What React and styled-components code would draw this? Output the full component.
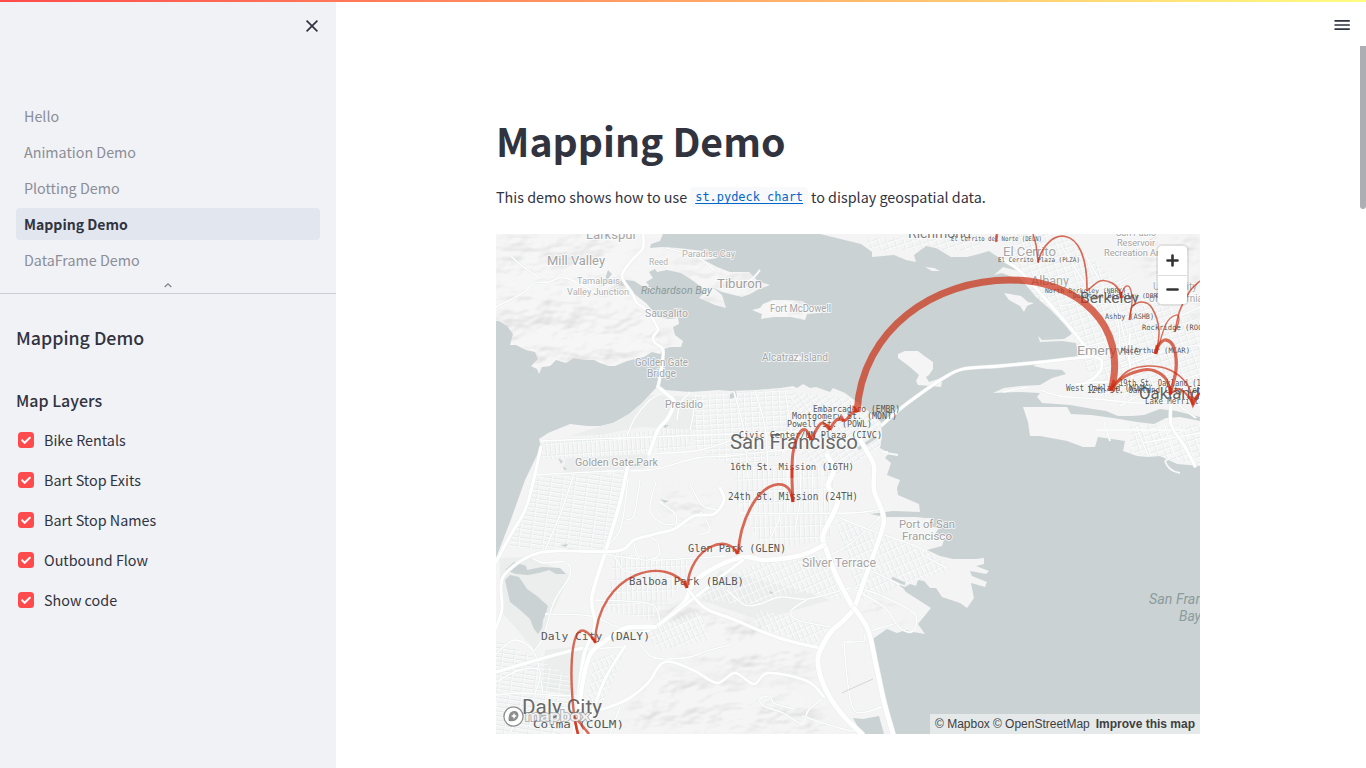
import React from 'react';
import styled, { createGlobalStyle } from 'styled-components';

const GlobalStyle = createGlobalStyle`
  * { box-sizing: border-box; }
  html, body { margin: 0; height: 100%; overflow: hidden; }
  body {
    background: #fff;
    color: #31333f;
    font-family: "Noto Sans CJK SC", "Open Sans", sans-serif;
    font-size: 14.4px;
  }
`;

const Page = styled.div`
  position: relative;
  display: flex;
  height: 768px;
  width: 1366px;
  overflow: hidden;
`;
const Decoration = styled.div`
  position: absolute;
  inset: 0 0 auto 0;
  height: 2px;
  background: linear-gradient(90deg, #ff4b4b, #fffd80);
  z-index: 2;
`;
const Sidebar = styled.aside`
  flex: 0 0 336px;
  height: 100%;
  background: #f0f2f6;
  display: flex;
  flex-direction: column;
`;
const SidebarTop = styled.div`
  height: 100px;
  padding: 16px 14px 0;
  display: flex;
  justify-content: flex-end;
`;
const IconButton = styled.button`
  display: flex;
  width: 20px;
  height: 20px;
  padding: 0;
  border: 0;
  background: none;
  color: #31333f;
`;
const Nav = styled.nav`
  height: 194px;
  padding: 0 16px;
  border-bottom: 1px solid #cbcdd2;
  display: flex;
  flex-direction: column;
  gap: 4px;
`;
const NavLink = styled.a`
  flex: 0 0 32px;
  line-height: 32px;
  padding: 0 8px;
  border-radius: 4px;
  font-size: ${(p) => (p.$active ? '14.05px' : '14.3px')};
  font-weight: ${(p) => (p.$active ? 700 : 400)};
  color: ${(p) => (p.$active ? '#31333f' : '#8b8d97')};
  background: ${(p) => (p.$active ? '#e2e7ef' : 'transparent')};
`;
const Chevron = styled.svg`
  align-self: center;
  margin-top: 1px;
`;
const Controls = styled.section`
  padding: 30px 16px;
`;
const Title = styled.h2`
  margin: 0 0 37px;
  font-size: 17.8px;
  font-weight: 500;
  line-height: 26px;
`;
const Subtitle = styled.h3`
  margin: 0 0 15px;
  font-size: 16px;
  font-weight: 500;
  line-height: 26px;
`;
const CheckList = styled.div`
  display: flex;
  flex-direction: column;
  gap: 16px;
`;
const CheckLabel = styled.label`
  display: flex;
  align-items: center;
  gap: 10px;
  padding-left: 2px;
  height: 24px;
  font-size: 14.35px;
  line-height: 24px;
`;
const Box = styled.span`
  display: flex;
  align-items: center;
  justify-content: center;
  width: 16px;
  height: 16px;
  border-radius: 3.5px;
  background: #ff4b4b;
`;
const Main = styled.main`
  flex: 1;
  display: flex;
  flex-direction: column;
`;
const Toolbar = styled.header`
  height: 46px;
  padding: 15px 14px 0;
  display: flex;
  justify-content: flex-end;
`;
const Scroller = styled.div`
  flex: 1;
  display: flex;
  justify-content: space-between;
  padding-left: 160px;
`;
const Content = styled.div`
  width: 704px;
  padding-top: 65px;
`;
const Scrollbar = styled.div`
  width: 6px;
  height: 163px;
  border-radius: 0 0 3px 3px;
  background: #adaeb3;
`;
const Heading = styled.h1`
  margin: 0;
  font-size: 39.2px;
  font-weight: 700;
  line-height: 58px;
`;
const Paragraph = styled.p`
  display: flex;
  align-items: center;
  margin: 15px 0 24px;
  height: 26px;
  font-size: 14.35px;
  line-height: 26px;
  white-space: nowrap;
`;
const Code = styled.code`
  height: 20px;
  margin: 0 3px;
  padding: 0 5px;
  border-radius: 4px;
  background: #f8f9fb;
  color: #0068c9;
  font: 11.95px/20px "DejaVu Sans Mono", monospace;
  text-decoration: underline;
  text-underline-offset: 2px;
`;
const MapFrame = styled.div`
  position: relative;
  width: 704px;
  height: 500px;
  overflow: hidden;
`;
const MapSvg = styled.svg`
  display: block;
`;
const ZoomGroup = styled.div`
  position: absolute;
  top: 12px;
  right: 13px;
  width: 29px;
  height: 58px;
  border-radius: 4px;
  background: #fff;
  box-shadow: 0 0 0 2px rgba(0, 0, 0, 0.08);
  display: flex;
  flex-direction: column;
`;
const ZoomButton = styled.button`
  flex: 1;
  display: flex;
  align-items: center;
  justify-content: center;
  padding: 0;
  border: 0;
  background: none;
  & + & { border-top: 1px solid #ddd; }
`;
const Attribution = styled.div`
  position: absolute;
  right: 0;
  bottom: 0;
  height: 20px;
  width: 270px;
  padding: 0 5px;
  display: flex;
  gap: 3px;
  font: 12px/20px "Liberation Sans", Arial, sans-serif;
  color: #404040;
  white-space: nowrap;
  background: rgba(255, 255, 255, 0.5);
`;
const Strong = styled.strong`
  margin-left: auto;
  font-weight: 700;
`;

// Catmull-Rom spline through a flat list of coordinates.
function curve(n) {
  const p = [];
  for (let i = 0; i < n.length; i += 2) p.push([n[i], n[i + 1]]);
  let d = `M${p[0]}`;
  for (let i = 0; i < p.length - 1; i += 1) {
    const a = p[i - 1] || p[i];
    const b = p[i];
    const c = p[i + 1];
    const e = p[i + 2] || c;
    d += `C${b[0] + (c[0] - a[0]) / 6} ${b[1] + (c[1] - a[1]) / 6} ${c[0] - (e[0] - b[0]) / 6} ${c[1] - (e[1] - b[1]) / 6} ${c[0]} ${c[1]}`;
  }
  return d;
}

const MARIN = 'M496 234H663L660 241 651 244 650 248 662 247 678 248 703 251 717 258 704 260 717 267 730 272 749 272 758 281 770 285 759 289 750 294 742 297 730 294 722 292 712 287 722 295 726 308 715 305 699 298 704 293 700 286 692 280 681 273 667 270 657 272 655 269 649 272 653 278 646 282 652 289 642 286 634 281 626 280 620 281 614 280 616 285 624 286 630 290 637 296 646 303 653 311 658 317 669 319 678 318 679 324 673 327 675 335 683 341 681 347 670 347 664 349 660 354 652 352 644 357 627 361 615 366 609 366 600 363 594 360 584 360 574 358 566 363 556 360 550 366 542 367 539 374 537 369 531 366 538 359 535 352 526 350 516 345 510 345 513 334 507 326 499 321 496 321Z';
const SF = 'M657 387L665 390 690 392 719 390 730 391 755 390 780 388 793 386 797 388 803 384 810 388 816 387 830 392 833 388 845 393 857 402 868 411 881 422 882 436 880 448 889 453 885 458 891 463 887 475 900 480 897 488 898 495 919 504 920 512 893 511 870 514 885 517 916 517 925 518 931 518 929 526 939 528 935 534 945 537 942 546 927 550 940 556 953 559 976 559 984 558 984 564 976 566 989 571 986 574 970 571 972 576 987 582 985 587 971 583 974 598 967 608 960 603 942 597 936 588 930 588 924 581 918 580 916 586 910 584 905 587 893 582 903 588 906 592 931 608 918 624 925 634 913 632 906 630 897 633 887 629 874 638 870 641 875 650 874 666 883 707 892 734H496V558L510 522 525 480 541 447 539 439 548 433 570 424 587 426 600 426 613 423 629 414 642 403 653 391Z';
const ISLANDS = 'M752 310L760 308 763 304 773 300 785 300 803 301 806 305 816 308 830 308 829 312 807 314 805 320 791 317 774 317 761 319 762 314ZM792 357L800 356 802 359 795 361ZM898 354L905 351 918 351 923 355 933 362 933 369 929 375 926 377 929 382 938 379 942 382 941 387 930 386 918 385 916 381 919 375 910 367 898 358ZM925 267L934 268 940 271 932 271ZM1004 293L1010 294 1021 296 1028 302 1034 303 1027 306 1024 312 1020 306 1009 300Z';
const EAST = 'M820 234H1200V417L1176 411 1160 409 1144 415 1132 416 1118 416 1106 411 1093 409 1070 405 1042 403 1037 397 1040 393 1020 392 993 393 1004 388 1020 386 1040 385 1052 378 1066 374 1062 370 1047 369 1033 366 1042 362 1060 360 1078 357 1077 349 1076 343 1062 341 1040 342 1038 336 1042 340 1064 339 1072 334 1066 326 1052 311 1036 297 1020 278 1012 277 1002 273 994 275 1003 267 1018 271 1004 261 989 251 979 254 967 257 951 257 936 248 926 246 914 255 916 262 906 260 894 255 872 257 872 252 861 244Z';
const ALAMEDA = 'M1023 407L1045 407 1067 407 1071 414 1091 415 1113 418 1137 422 1154 424 1166 418 1180 417 1200 421V466L1177 464 1160 456 1148 457 1137 456 1123 451 1125 441 1098 437 1095 447 1083 447 1067 441 1040 436 1030 436 1028 422Z';
const LAKES = 'M505 570L514 562 526 566 527 570 542 567 560 568 566 574 556 574 549 570 539 573 528 575 516 574ZM505 580L510 575 519 577 527 589 537 596 548 606 546 613 543 620 542 628 538 634 534 629 530 619 519 609 510 602ZM604 284L606 276 608 270 612 274 608 279 614 282ZM661 425L669 425 665 428ZM558 458L563 461 561 464ZM563 466L567 469 564 470ZM631 464H640V466H631ZM560 545L568 544 566 547ZM660 499L669 501 665 503ZM769 591L774 593 770 594ZM863 719L879 716 884 734H862L853 718ZM730 394L736 391 737 397 730 399Z';

const HIGHWAYS = [
  [3.6, [658, 387, 668, 395, 674, 402, 668, 418, 658, 430, 649, 454]],
  [2.6, [643, 234, 643, 248, 632, 260, 622, 276, 632, 293, 637, 303, 648, 311, 656, 325, 658, 330, 653, 337, 655, 343, 663, 350, 661, 371, 658, 387]],
  [3.6, [628, 464, 620, 502, 606, 550, 592, 597, 595, 626, 584, 655, 578, 700, 574, 734]],
  [3, [496, 562, 510, 536, 527, 505, 541, 447]],
  [2.8, [496, 628, 502, 609, 501, 585, 507, 572, 530, 556, 556, 551, 617, 551, 634, 540, 655, 534, 674, 529, 694, 516, 714, 514, 724, 500, 720, 488]],
  [4.5, [857, 434, 866, 450, 874, 466, 874, 490, 883, 514, 882, 530, 868, 570, 855, 606]],
  [5, [854, 610, 836, 575, 825, 546, 823, 535, 834, 512, 838, 498, 828, 486, 834, 470, 827, 455]],
  [4.6, [824, 545, 802, 555, 765, 560, 745, 557, 720, 565, 694, 582, 684, 603, 655, 628]],
  [3, [743, 560, 718, 579, 694, 598, 655, 627, 640, 633]],
  [3, [687, 588, 705, 608, 735, 620, 779, 638, 819, 648]],
  [4.5, [655, 627, 626, 628, 604, 642, 590, 655, 582, 686, 577, 734]],
  [5, [854, 610, 842, 622, 830, 633, 818, 658, 824, 686, 841, 713, 862, 734]],
  [4.8, [854, 608, 868, 630, 876, 665, 884, 702, 893, 734]],
  [3, [496, 672, 544, 658, 582, 648]],
  [2.8, [625, 646, 606, 677, 593, 710, 584, 734]],
  [2.6, [600, 710, 626, 700, 648, 683, 660, 665, 672, 662, 695, 671, 717, 683, 735, 673, 754, 684, 768, 673, 807, 681, 824, 697]],
  [2.8, [882, 425, 900, 409, 920, 394, 942, 379, 963, 369, 1000, 366, 1043, 362, 1093, 357, 1102, 365, 1095, 377, 1082, 384]],
  [2.8, [1003, 260, 1020, 271, 1048, 302, 1073, 331, 1093, 357]],
  [2, [1076, 384, 1110, 382, 1140, 389, 1170, 395, 1200, 405]],
  [3, [1172, 396, 1171, 424, 1185, 447, 1195, 466]],
  [2, [1130, 334, 1129, 356, 1133, 384]],
];
const STREETS = [
  [540, 441, 620, 438, 730, 434, 812, 431], [533, 475, 610, 471, 650, 470, 697, 458, 730, 456, 791, 449],
  [574, 474, 560, 515, 545, 550], [628, 480, 620, 530, 600, 552], [694, 399, 693, 416, 690, 430],
  [785, 391, 789, 415, 797, 471], [734, 392, 744, 431, 748, 478], [755, 391, 765, 427, 768, 470],
  [664, 392, 650, 400, 635, 418, 627, 436], [690, 392, 680, 404, 677, 420],
  [650, 454, 700, 450, 741, 437], [496, 654, 515, 640, 535, 654, 543, 694], [622, 647, 575, 650],
  [496, 682, 520, 670, 540, 671, 535, 694], [640, 644, 655, 658, 690, 657, 706, 651, 730, 645],
  [545, 614, 590, 616, 621, 628, 653, 629], [595, 600, 650, 604, 660, 622],
  [532, 558, 544, 563, 565, 562, 570, 575, 554, 602, 542, 640, 530, 655],
  [600, 553, 630, 558, 650, 560, 680, 559, 725, 556], [614, 555, 625, 571, 650, 572],
  [640, 480, 634, 515, 625, 520], [656, 482, 650, 510, 665, 524, 687, 521, 702, 512],
  [660, 502, 676, 515, 675, 528], [633, 540, 640, 559, 658, 556, 657, 542, 645, 535],
  [690, 484, 702, 505, 718, 510], [700, 535, 710, 530, 705, 518],
  [795, 530, 800, 500, 801, 466], [779, 514, 779, 520, 770, 539], [740, 513, 850, 513, 884, 508],
  [813, 466, 812, 513], [822, 466, 822, 513], [788, 514, 787, 470],
  [727, 590, 745, 605, 760, 604, 780, 597, 808, 599, 850, 588],
  [808, 599, 791, 611, 798, 620, 830, 627], [855, 587, 880, 595, 914, 613, 913, 631, 900, 628, 884, 607, 852, 588],
  [844, 642, 848, 685, 856, 712, 882, 707], [844, 642, 864, 641, 867, 633, 897, 623],
  [822, 699, 808, 711, 802, 724, 783, 713, 764, 706, 760, 699, 770, 696, 774, 703, 794, 709],
  [802, 716, 840, 728, 858, 732], [830, 563, 868, 570, 900, 585], [820, 560, 850, 544, 883, 514],
  [840, 518, 870, 530, 920, 548, 923, 555, 947, 568],
  [620, 707, 610, 734], [496, 695, 520, 693, 550, 695, 580, 696], [510, 734, 525, 710, 570, 708],
  [496, 307, 523, 293, 534, 283, 549, 282, 566, 278, 602, 296], [511, 256, 522, 266, 540, 278],
  [1116, 300, 1130, 356, 1150, 390], [1060, 244, 1088, 290, 1117, 355], [1087, 258, 1116, 313, 1120, 355],
  [1133, 275, 1085, 300, 1060, 306], [1200, 307, 1143, 331, 1085, 347], [1200, 345, 1165, 351, 1121, 367],
  [1200, 374, 1150, 390, 1120, 406], [1160, 375, 1175, 401, 1196, 418], [1104, 422, 1110, 441],
  [1136, 426, 1148, 455], [1164, 424, 1175, 457], [1096, 430, 1185, 430], [1142, 443, 1200, 433],
  [1040, 390, 1060, 396, 1096, 399, 1140, 403, 1172, 402], [1028, 387, 1003, 392],
  [760, 270, 750, 280, 730, 285], [666, 248, 697, 257, 715, 271],
];

const ARCS = [
  [7, 'M857 412C862 328 935 280 1010 280C1078 280 1129 325 1111 391'],
  [3, [1111, 389, 1124, 377, 1143, 370, 1155, 371, 1166, 379, 1171, 394]],
  [1.7, [1112, 387, 1128, 371, 1148, 366, 1170, 370, 1187, 384, 1193, 402]],
  [3.3, [1170, 394, 1176, 370, 1174, 348, 1166, 340, 1158, 346, 1156, 354]],
  [3, [857, 411, 852, 413, 847, 419, 844, 421]],
  [3, [844, 421, 838, 419, 833, 424, 830, 430]],
  [3, [830, 430, 822, 423, 815, 432, 812, 440]],
  [3, [811, 440, 806, 430, 799, 434, 793, 453, 792, 477, 793, 502]],
  [2.8, 'M793 502C790 475 768 483 756 499Q740 522 738 554'],
  [2.5, 'M737 554C730 533 690 545 687 588'],
  [2.4, 'M687 588C670 554 597 570 595 643'],
  [2.4, 'M595 642C565 595 569 705 578 734'],
  [1.7, 'M1038 263C1045 228 1088 218 1087 291'],
  [1.5, [1038, 262, 1036, 245, 1033, 234]],
  [1.6, [1087, 291, 1100, 281, 1112, 283, 1119, 290, 1121, 298]],
  [1.3, [1120, 298, 1125, 287, 1130, 288, 1132, 302, 1129, 320]],
  [1.5, [1130, 320, 1132, 307, 1142, 302, 1152, 308, 1159, 330, 1156, 354]],
  [1.3, [1157, 352, 1166, 324, 1176, 315, 1179, 320, 1175, 332]],
  [1.6, [1175, 331, 1180, 310, 1190, 291, 1200, 281]],
  [2, [1170, 394, 1179, 389, 1188, 396, 1193, 405]],
  [2, [1193, 405, 1195, 398, 1200, 393]],
];

// x, baseline, width, size, colour, text
const PLACES = [
  [586, 239, 51, 12, '#a6a6a6', 'Larkspur'], [547, 265, 58, 13, '#a2a2a2', 'Mill Valley'],
  [649, 265, 19, 9.5, '#b0b0b0', 'Reed'], [682, 257, 53, 9.5, '#b0b0b0', 'Paradise Cay'],
  [577, 284, 43, 9.5, '#b0b0b0', 'Tamalpais'], [567, 295, 62, 9.5, '#b0b0b0', 'Valley Junction'],
  [717, 288, 45, 13, '#a0a0a0', 'Tiburon'], [645, 317, 43, 10.5, '#a5a5a5', 'Sausalito'],
  [770, 312, 61, 10, '#a5a5a5', 'Fort McDowell'], [762, 361, 66, 10, '#a5a5a5', 'Alcatraz Island'],
  [635, 366, 53, 10, '#a5a5a5', 'Golden Gate'], [647, 377, 29, 10, '#a5a5a5', 'Bridge'],
  [665, 408, 38, 10.5, '#a0a0a0', 'Presidio'], [575, 466, 83, 11, '#a0a0a0', 'Golden Gate Park'],
  [1003, 256, 53, 12.5, '#a5a5a5', 'El Cerrito'], [1031, 285, 38, 12.5, '#a5a5a5', 'Albany'],
  [1077, 355, 64, 12.5, '#a0a0a0', 'Emeryville'], [899, 528, 56, 11.5, '#a0a0a0', 'Port of San'],
  [902, 540, 50, 11.5, '#a0a0a0', 'Francisco'], [802, 567, 74, 12.5, '#a6a6a6', 'Silver Terrace'],
  [1116, 236, 40, 9.5, '#a3a3a3', 'San Pablo'], [1117, 246, 38, 9.5, '#a3a3a3', 'Reservoir'],
  [1104, 256, 65, 9.5, '#a3a3a3', 'Recreation Area'], [1153, 290, 44, 10, '#aaa', 'University'],
  [1149, 302, 54, 10, '#aaa', 'of California'], [908, 238, 63, 13.5, '#7c7c7c', 'Richmond'],
  [1080, 303, 59, 14.5, '#626262', 'Berkeley'], [1139, 399, 61, 16.5, '#606060', 'Oakland'],
  [730, 449, 128, 20, '#686868', 'San Francisco'], [522, 714, 80, 20, '#686868', 'Daly City'],
];
const WATER_NAMES = [
  [641, 294, 71, 10.5, 'Richardson Bay'],
  [1149, 604, 87, 14, 'San Francisco'], [1179, 621, 22, 14, 'Bay'],
];
// x, baseline, width, size, station
const STATIONS = [
  [951, 241, 91, 6.5, 'El Cerrito del Norte (DELN)'], [998, 262, 82, 6.5, 'El Cerrito Plaza (PLZA)'],
  [1045, 293, 81, 6.5, 'North Berkeley (NBRK)'], [1073, 298, 92, 6.5, 'Downtown Berkeley (DBRK)'],
  [1105, 319, 49, 7.5, 'Ashby (ASHB)'], [1142, 330, 69, 7.5, 'Rockridge (ROCK)'],
  [1121, 353, 69, 7.5, 'MacArthur (MCAR)'], [1066, 391, 86, 8, 'West Oakland (WOAK)'],
  [1119, 386, 99, 8, '19th St. Oakland (19TH)'], [1087, 393, 160, 8, '12th St. Oakland City Center (12TH)'],
  [1145, 404, 85, 8, 'Lake Merritt (LAKE)'], [813, 412, 87, 8.5, 'Embarcadero (EMBR)'],
  [792, 419, 105, 8.5, 'Montgomery St. (MONT)'], [787, 427, 85, 8.8, 'Powell St. (POWL)'],
  [739, 438, 143, 9, 'Civic Center/UN Plaza (CIVC)'], [730, 470, 124, 9.3, '16th St. Mission (16TH)'],
  [728, 500, 130, 9.6, '24th St. Mission (24TH)'], [688, 552, 98, 10, 'Glen Park (GLEN)'],
  [629, 585, 115, 10.5, 'Balboa Park (BALB)'], [541, 640, 109, 10.9, 'Daly City (DALY)'],
  [533, 728, 91, 11.3, 'Colma (COLM)'],
];

function Pattern({ id, w, h, angle }) {
  return (
    <pattern id={id} width={w} height={h} patternUnits="userSpaceOnUse" patternTransform={`rotate(${angle})`}>
      <path d={`M0 .5H${w}M.5 0V${h}`} stroke="#e2e8e8" strokeWidth=".9" fill="none" />
      <path d={`M0 1.4H${w}M1.4 0V${h}`} stroke="#fcfdfd" strokeWidth=".8" fill="none" />
    </pattern>
  );
}

function BayMap() {
  return (
    <MapSvg width="704" height="500" viewBox="496 234 704 500">
      <defs>
        <Pattern id="gridWest" w={4.5} h={12} angle={-4} />
        <Pattern id="gridTilt" w={12} h={4.5} angle={8} />
        <Pattern id="gridNorth" w={7} h={5} angle={-3} />
        <Pattern id="gridMission" w={5} h={12} angle={-2} />
        <Pattern id="gridSoma" w={8} h={5} angle={-34} />
        <Pattern id="gridSouth" w={5} h={9} angle={-24} />
        <Pattern id="gridEast" w={8} h={6} angle={-18} />
        <clipPath id="landClip"><path d={MARIN + SF + EAST + ISLANDS + ALAMEDA} /></clipPath>
        <filter id="relief" x="0" y="0" width="100%" height="100%" colorInterpolationFilters="sRGB">
          <feTurbulence type="fractalNoise" baseFrequency=".016 .028" numOctaves="4" seed="8" />
          <feDiffuseLighting surfaceScale="9" diffuseConstant="1.25" lightingColor="#fff" result="light">
            <feDistantLight azimuth="225" elevation="50" />
          </feDiffuseLighting>
          <feGaussianBlur in="SourceAlpha" stdDeviation="7" result="mask" />
          <feComposite in="light" in2="mask" operator="in" />
        </filter>
      </defs>
      <rect x="496" y="234" width="704" height="500" fill="#cad2d3" />
      <path d={MARIN + ISLANDS + ALAMEDA} fill="#f4f5f4" />
      <path d={SF + EAST} fill="#f3f4f3" />
      <g clipPath="url(#landClip)">
        <path d="M565 458L648 454 646 468 564 474ZM500 558L532 557 570 575 535 650 500 610ZM545 650L590 645 575 695 543 690ZM650 395L700 397 695 430 640 427 600 435 570 436 620 420ZM720 570L800 590 830 600 760 620 700 600Z" fill="#ebeeed" />
        <g filter="url(#relief)" opacity=".13">
          <path d="M496 234H650L615 275 650 310 680 350 640 362 530 375 496 330ZM650 250L770 272V300H700L680 270ZM750 295H835V322H750ZM1120 234H1200V320L1160 290Z" />
          <path d="M635 700L665 667 700 680 735 680 755 686 790 684 815 700 830 734H625ZM640 600L720 610 800 640 815 680 770 668 740 678 690 655Z" />
          <path d="M665 495L715 490 705 530 670 530ZM855 590L895 605 905 625 860 610Z" />
        </g>
        <path d="M545 441L660 430 650 453 540 460ZM660 428L690 430 690 448 655 452Z" fill="url(#gridWest)" />
        <path d="M536 477L628 472 605 550 508 548ZM496 640L540 660 575 680 560 734H496Z" fill="url(#gridTilt)" />
        <path d="M692 395L790 389 798 448 740 470 695 448Z" fill="url(#gridNorth)" />
        <path d="M735 465H835L830 540 765 550 735 500ZM615 553L690 560 688 580 650 620 605 610Z" fill="url(#gridMission)" />
        <path d="M790 392L850 398 881 422 882 445 835 478 795 450Z" fill="url(#gridSoma)" />
        <path d="M750 565L820 555 848 600 800 592 745 605 695 598ZM835 520L930 550 950 570 860 600ZM640 630L700 610 710 640 660 650ZM592 660L625 650 600 710 582 734ZM760 610L830 625 815 645 750 625Z" fill="url(#gridSouth)" />
        <path d="M1005 234H1060L1130 290 1200 320V405L1100 395 1085 365 1075 340 1035 300ZM865 238H980V250H870ZM1130 425H1200V464L1130 453Z" fill="url(#gridEast)" />
      </g>
      <path d={LAKES} fill="#cad2d3" />
      <path d="M892 578L905 584M858 449L876 437" stroke="#cad2d3" strokeWidth="3" fill="none" />
      {STREETS.map((s, i) => (
        <g key={i} fill="none">
          <path d={curve(s)} stroke="#e6ebeb" strokeWidth="2.2" />
          <path d={curve(s)} stroke="#fff" strokeWidth="1.3" />
        </g>
      ))}
      {HIGHWAYS.map(([w, s], i) => (
        <g key={i} fill="none" strokeLinecap="round">
          <path d={curve(s)} stroke="#e9eded" strokeWidth={w + 1} />
          <path d={curve(s)} stroke="#fff" strokeWidth={w} />
        </g>
      ))}
      <path d="M842 693L857 686 873 679" stroke="#d5d7d7" fill="none" />
      <path d="M882 452H888M886 453L898 455M1165 461Q1168 471 1180 473M1165 461L1173 456" stroke="#f7f8f8" fill="none" strokeWidth="1.8" />

      <g fontFamily="Roboto, sans-serif" stroke="#fff" strokeOpacity=".75" strokeWidth="1.8" strokeLinejoin="round" paintOrder="stroke">
        {PLACES.map(([x, y, w, s, c, t]) => (
          <text key={t} x={x} y={y} fontSize={s} textLength={w} lengthAdjust="spacingAndGlyphs" fill={c}>{t}</text>
        ))}
      </g>
      <g fontFamily="Roboto, sans-serif" fontStyle="italic" fill="#8b9c9d">
        {WATER_NAMES.map(([x, y, w, s, t]) => (
          <text key={t} x={x} y={y} fontSize={s} textLength={w} lengthAdjust="spacingAndGlyphs">{t}</text>
        ))}
      </g>
      <g fontFamily="'DejaVu Sans Mono', monospace" fill="#454545" fillOpacity=".9">
        {STATIONS.map(([x, y, w, s, t]) => (
          <text key={t} x={x} y={y} fontSize={s} textLength={w} lengthAdjust="spacingAndGlyphs">{t}</text>
        ))}
      </g>
      <g fill="none" stroke="#cb2d12" strokeOpacity=".7">
        {ARCS.map(([w, p], i) => <path key={i} d={typeof p === 'string' ? p : curve(p)} strokeWidth={w} />)}
      </g>
      <g fill="none" stroke="#d42a10" strokeOpacity=".7" strokeWidth="2.6">
        <path d="M853 406L858 412M841 416L844 421M827 424L830 430M808 433L811 440M792 468V478M791 494L793 502M735 549L738 554M685 581L687 588M592 637L596 643M574 716L578 734M576 718L589 734M1114 380L1110 391M1170 386V395M1190 396L1193 405 1199 393M997 234L996 242M1157 345L1155 354M1120 292L1122 298" />
      </g>
      <g>
        <circle cx="513.5" cy="716.5" r="9.6" fill="#fff" fillOpacity=".9" stroke="#8e8e8e" strokeWidth="1.3" />
        <path d="M508.7 721Q507.8 713 512.5 711.2 518.4 710 518.5 716 516.8 722.5 508.7 721Z" fill="#8d8d8d" />
        <path d="M514 713L515 715 517 716 515 717 514 719 513 717 511 716 513 715Z" fill="#fff" />
        <text x="525" y="721" fontFamily="Lato, sans-serif" fontWeight="700" fontSize="16" textLength="65" lengthAdjust="spacingAndGlyphs" fill="#fff" fillOpacity=".85" stroke="#8e8e8e" strokeOpacity=".65" strokeWidth="1.8" paintOrder="stroke">mapbox</text>
      </g>
    </MapSvg>
  );
}

const PAGES = ['Hello', 'Animation Demo', 'Plotting Demo', 'Mapping Demo', 'DataFrame Demo'];
const LAYERS = ['Bike Rentals', 'Bart Stop Exits', 'Bart Stop Names', 'Outbound Flow', 'Show code'];

export default function App() {
  return (
    <>
      <GlobalStyle />
      <Page>
        <Decoration />
        <Sidebar>
          <SidebarTop>
            <IconButton aria-label="Close">
              <svg width="20" height="20" viewBox="0 0 20 20"><path d="M4.6 4.6L15.4 15.4M15.4 4.6L4.6 15.4" stroke="currentColor" strokeWidth="1.7" /></svg>
            </IconButton>
          </SidebarTop>
          <Nav>
            {PAGES.map((p) => <NavLink key={p} $active={p === 'Mapping Demo'}>{p}</NavLink>)}
            <Chevron width="10" height="8" viewBox="0 0 10 8"><path d="M1.7 6L5 2.8 8.3 6" fill="none" stroke="#81838c" strokeWidth="1.3" /></Chevron>
          </Nav>
          <Controls>
            <Title>Mapping Demo</Title>
            <Subtitle>Map Layers</Subtitle>
            <CheckList>
              {LAYERS.map((l) => (
                <CheckLabel key={l}>
                  <Box>
                    <svg width="12" height="10" viewBox="0 0 12 10"><path d="M1.6 4.7L4.7 7.8 10.4 2.1" fill="none" stroke="#fff" strokeWidth="2" /></svg>
                  </Box>
                  {l}
                </CheckLabel>
              ))}
            </CheckList>
          </Controls>
        </Sidebar>
        <Main>
          <Toolbar>
            <IconButton aria-label="Menu">
              <svg width="20" height="20" viewBox="0 0 20 20"><path d="M2.5 5.9H17.8M2.5 10H17.8M2.5 14.1H17.8" stroke="currentColor" strokeWidth="1.7" /></svg>
            </IconButton>
          </Toolbar>
          <Scroller>
            <Content>
              <Heading>Mapping Demo</Heading>
              <Paragraph>
                <span>This demo shows how to use</span>
                <Code>st.pydeck_chart</Code>
                <span>to display geospatial data.</span>
              </Paragraph>
              <MapFrame>
                <BayMap />
                <ZoomGroup>
                  <ZoomButton aria-label="Zoom in">
                    <svg width="13" height="13" viewBox="0 0 13 13"><path d="M6.5 1.5V11.5M1.5 6.5H11.5" stroke="#333" strokeWidth="2.6" strokeLinecap="round" /></svg>
                  </ZoomButton>
                  <ZoomButton aria-label="Zoom out">
                    <svg width="13" height="13" viewBox="0 0 13 13"><path d="M1.5 6.5H11.5" stroke="#333" strokeWidth="2.6" strokeLinecap="round" /></svg>
                  </ZoomButton>
                </ZoomGroup>
                <Attribution>
                  <span>© Mapbox</span>
                  <span>© OpenStreetMap</span>
                  <Strong>Improve this map</Strong>
                </Attribution>
              </MapFrame>
            </Content>
            <Scrollbar />
          </Scroller>
        </Main>
      </Page>
    </>
  );
}
